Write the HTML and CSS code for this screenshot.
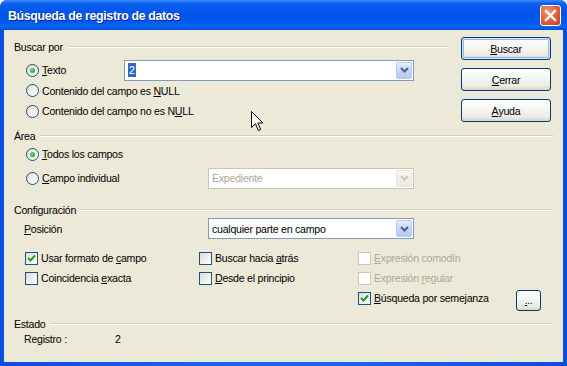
FILE: index.html
```html
<!DOCTYPE html>
<html lang="es">
<head>
<meta charset="utf-8">
<title>Búsqueda de registro de datos</title>
<link rel="stylesheet" href="styles.css">
</head>
<body>
<div class="window">
  <div class="titlebar">
    <span class="title">Búsqueda de registro de datos</span>
    <span class="close"><svg width="21" height="21" viewBox="0 0 21 21"><path d="M6 6 L15 15 M15 6 L6 15" stroke="#fff" stroke-width="2.4" stroke-linecap="square"/></svg></span>
  </div>
  <div class="body">
    <div class="top">
      <div class="left">
        <div class="group-head"><span>Buscar por</span><i class="rule"></i></div>
        <div class="row r-first">
          <label class="opt w110"><span class="radio on"></span><span><u>T</u>exto</span></label>
          <div class="combo wide"><span class="val"><span class="sel">2</span></span><span class="drop"><svg width="9" height="6" viewBox="0 0 9 6"><path d="M1 1 L4.5 4.5 L8 1" fill="none" stroke="#4D6185" stroke-width="2"/></svg></span></div>
        </div>
        <div class="row r21">
          <label class="opt"><span class="radio"></span><span>Contenido del campo es <u>N</u>ULL</span></label>
        </div>
        <div class="row">
          <label class="opt"><span class="radio"></span><span>Contenido del campo no es N<u>U</u>LL</span></label>
        </div>
      </div>
      <div class="buttons">
        <span class="btn default"><u>B</u>uscar</span>
        <span class="btn"><u>C</u>errar</span>
        <span class="btn"><u>A</u>yuda</span>
      </div>
    </div>

    <div class="group-head g-area"><span>Área</span><i class="rule"></i></div>
    <div class="row r-todos">
      <label class="opt"><span class="radio on"></span><span><u>T</u>odos los campos</span></label>
    </div>
    <div class="row r-campo">
      <label class="opt w194"><span class="radio"></span><span><u>C</u>ampo individual</span></label>
      <div class="combo narrow disabled"><span class="val">Expediente</span><span class="drop"><svg width="9" height="6" viewBox="0 0 9 6"><path d="M1 1 L4.5 4.5 L8 1" fill="none" stroke="#C9C7BA" stroke-width="2"/></svg></span></div>
    </div>

    <div class="group-head g-config"><span>Configuración</span><i class="rule"></i></div>
    <div class="row r-pos">
      <span class="plain w194"><u>P</u>osición</span>
      <div class="combo narrow"><span class="val">cualquier parte en campo</span><span class="drop"><svg width="9" height="6" viewBox="0 0 9 6"><path d="M1 1 L4.5 4.5 L8 1" fill="none" stroke="#4D6185" stroke-width="2"/></svg></span></div>
    </div>

    <div class="checks">
      <label class="chk"><span class="box on"><svg width="11" height="11" viewBox="0 0 11 11"><path d="M2 5 L4.5 7.5 L9 2.5" fill="none" stroke="#21A121" stroke-width="2"/></svg></span><span>Usar formato de <u>c</u>ampo</span></label>
      <label class="chk"><span class="box"></span><span>Buscar hacia <u>a</u>trás</span></label>
      <label class="chk dis"><span class="box"></span><span><u>E</u>xpresión comodín</span></label>
      <label class="chk"><span class="box"></span><span>Coincidencia <u>e</u>xacta</span></label>
      <label class="chk"><span class="box"></span><span><u>D</u>esde el principio</span></label>
      <label class="chk dis"><span class="box"></span><span>Expresión <u>r</u>egular</span></label>
      <span></span>
      <span></span>
      <div class="chk last"><span class="box on"><svg width="11" height="11" viewBox="0 0 11 11"><path d="M2 5 L4.5 7.5 L9 2.5" fill="none" stroke="#21A121" stroke-width="2"/></svg></span><span><u>B</u>úsqueda por semejanza</span><span class="btn dots"><u>.</u>..</span></div>
    </div>

    <div class="group-head g-estado"><span>Estado</span><i class="rule"></i></div>
    <div class="row r-reg">
      <span class="reg-label">Registro :</span><span>2</span>
    </div>
  </div>
  <svg class="cursor" width="13" height="21" viewBox="0 0 13 21"><path d="M0.5 0.5 L0.5 16.5 L4.5 12.8 L7.3 19.5 L9.6 18.5 L6.9 12 L11.8 12 Z" fill="#fff" stroke="#000" stroke-width="1" stroke-linejoin="miter"/></svg>
</div>
</body>
</html>
```

FILE: styles.css
```css
* { box-sizing: border-box; }
html, body { margin: 0; padding: 0; }
body {
  font-family: "Liberation Sans", Arial, sans-serif;
  font-size: 10.6px;
  letter-spacing: -0.25px;
  color: #000;
  background: #fff;
}
.window {
  position: relative;
  width: 567px;
  height: 366px;
  display: flex;
  flex-direction: column;
  background: linear-gradient(90deg, #0A4FDD, #1667F0 40%, #1667F0 60%, #0A4FDD);
  border-radius: 7px 7px 0 0;
  overflow: hidden;
}
.titlebar {
  height: 30px;
  flex: none;
  display: flex;
  align-items: center;
  padding: 0 6px 0 8px;
  background: linear-gradient(#3A8CFF 0, #0A5FF0 12%, #0054E8 45%, #0058EE 75%, #0A66F5 88%, #0050DC 100%);
}
.title {
  color: #fff;
  font-weight: bold;
  font-size: 12.4px;
  letter-spacing: -0.35px;
  text-shadow: 1px 1px 0 #0A2A8A;
  padding-top: 1px;
}
.close {
  margin-left: auto;
  width: 21px;
  height: 21px;
  border: 1px solid #fff;
  border-radius: 3px;
  background: radial-gradient(circle at 35% 30%, #F09878 0, #E2603A 50%, #C8401C 100%);
  display: flex;
  align-items: center;
  justify-content: center;
}
.close svg { display: block; margin: -1px; }
.body {
  flex: 1;
  margin: 0 4px 4px 4px;
  background: #ECE9D8;
  padding: 7px 10px 0 10px;
}
.top { display: flex; }
.left { width: 433px; }
.buttons {
  margin-left: 14px;
  display: flex;
  flex-direction: column;
  gap: 8px;
}
.btn {
  width: 90px;
  height: 23px;
  display: flex;
  align-items: center;
  justify-content: center;
  border: 1px solid #003C74;
  border-radius: 3px;
  background: linear-gradient(#FFFFFF 0, #F6F6F2 40%, #ECEBE4 80%, #D8D3C6 100%);
}
.btn.default {
  box-shadow: inset 0 0 0 1px #CEE7FF, inset 0 0 0 2px #98B8EA;
}
.group-head {
  display: flex;
  align-items: center;
  height: 14px;
  margin-top: 3px;
}
.rule {
  flex: 1;
  height: 2px;
  margin-left: 5px;
  border-top: 1px solid #D0CEBF;
  border-bottom: 1px solid #FFFFFF;
}
.row {
  display: flex;
  align-items: center;
  height: 20px;
}
.r-first { margin-top: 6px; }
.r21 { height: 21px; }
.opt {
  display: flex;
  align-items: center;
  gap: 3px;
  padding-left: 12px;
}
.w110 { width: 110px; flex: none; }
.w194 { width: 194px; flex: none; }
.plain { padding-left: 10px; }
.radio {
  width: 13px;
  height: 13px;
  border-radius: 50%;
  border: 1px solid #1C5180;
  background: linear-gradient(135deg, #DCD9CF 0, #F4F3EE 55%, #FFFFFF 100%);
  display: flex;
  align-items: center;
  justify-content: center;
  flex: none;
}
.radio.on::after {
  content: "";
  width: 5px;
  height: 5px;
  border-radius: 50%;
  background: radial-gradient(circle at 40% 40%, #7BE07B 0, #21A121 70%);
}
.combo {
  height: 21px;
  border: 1px solid #7F9DB9;
  background: #fff;
  display: flex;
  align-items: center;
  padding: 1px;
}
.combo.wide { width: 290px; }
.combo.narrow { width: 206px; }
.combo .val {
  flex: 1;
  padding-left: 2px;
  display: flex;
  align-items: center;
}
.sel {
  background: #316AC5;
  color: #fff;
  padding: 0 1px;
  line-height: 14px;
}
.drop {
  width: 16px;
  height: 17px;
  border: 1px solid #B9CBF3;
  border-radius: 2px;
  background: linear-gradient(#E6EEFC, #C1D3FB 60%, #B4C8F6);
  display: flex;
  align-items: center;
  justify-content: center;
}
.combo.disabled .val { color: #ACA899; }
.combo.disabled { border-color: #C9C7BA; }
.combo.disabled .drop {
  border-color: #E8E6DC;
  background: linear-gradient(#F7F6F1, #EDEBE1);
}
.g-area { margin-top: 7px; }
.r-todos { margin-top: 1px; }
.r-campo { margin-top: 3px; height: 22px; }
.g-config { margin-top: 14px; }
.r-pos { margin-top: 1px; height: 21px; }
.checks {
  margin-top: 9px;
  display: grid;
  grid-template-columns: 174px 159px 1fr;
  grid-auto-rows: 20px;
  padding-left: 11px;
}
.chk {
  display: flex;
  align-items: center;
  gap: 3px;
}
.box {
  width: 13px;
  height: 13px;
  border: 1px solid #1C5180;
  background: linear-gradient(135deg, #DCDCD7 0, #F2F2EE 60%, #FFFFFF 100%);
  display: flex;
  align-items: center;
  justify-content: center;
  flex: none;
}
.chk.dis { color: #ACA899; }
.chk.dis .box { border-color: #CAC8BB; background: #fff; }
.btn.dots {
  width: 25px;
  height: 21px;
  margin-left: auto;
  margin-right: 12px;
  align-self: flex-start;
  margin-top: 2px;
  align-items: flex-end;
  padding-bottom: 4px;
  font-size: 10px;
}
.g-estado { margin-top: 9px; }
.r-reg { margin-top: 1px; height: 14px; padding-left: 10px; }
.reg-label { width: 91px; }
.cursor {
  position: absolute;
  left: 251px;
  top: 111px;
}
```
